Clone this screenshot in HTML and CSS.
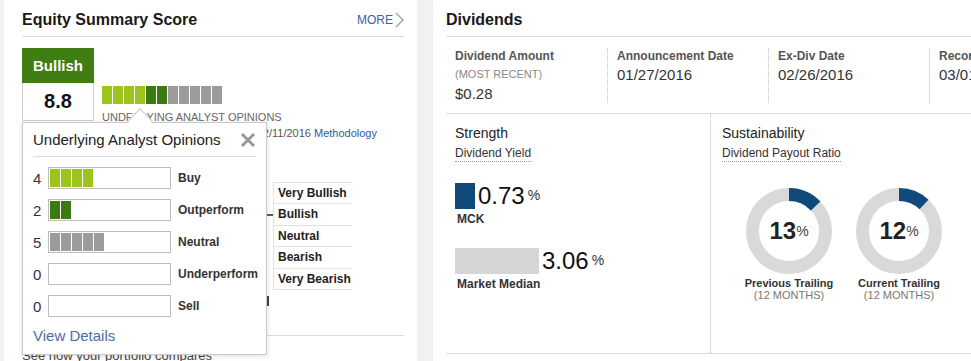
FILE: index.html
```html
<!DOCTYPE html>
<html lang="en">
<head>
  <meta charset="UTF-8">
  <meta name="viewport" content="width=device-width, initial-scale=1.0">
  <title>Equity Summary &amp; Dividends</title>
  <link rel="stylesheet" href="styles.css">
</head>
<body>
  <div class="page">

    <!-- Equity Summary Score -->
    <section class="panel ess">
      <div class="panel-head">
        <h2>Equity Summary Score</h2>
        <a href="#" class="more">MORE
          <svg width="9" height="16" viewBox="0 0 9 16"><polyline points="1,1 8,8 1,15" fill="none" stroke="#a0a0a0" stroke-width="1.4"/></svg>
        </a>
      </div>

      <div class="score-top">
        <div class="score-box">
          <div class="score-label">Bullish</div>
          <div class="score-value">8.8</div>
        </div>
        <div class="score-info">
          <div class="seg-bar">
            <span class="seg buy"></span><span class="seg buy"></span><span class="seg buy"></span><span class="seg buy"></span>
            <span class="seg out"></span><span class="seg out"></span>
            <span class="seg neu"></span><span class="seg neu"></span><span class="seg neu"></span><span class="seg neu"></span><span class="seg neu"></span>
          </div>
          <div class="caption">Underlying Analyst Opinions</div>
          <div class="asof">as of 02/11/2016 <a href="#">Methodology</a></div>
        </div>
      </div>

      <div class="scale">
        <div class="scale-row"><span class="tick"></span><span class="scale-label">Very Bullish</span></div>
        <div class="scale-row"><span class="tick on"></span><span class="scale-label">Bullish</span></div>
        <div class="scale-row"><span class="tick"></span><span class="scale-label">Neutral</span></div>
        <div class="scale-row"><span class="tick"></span><span class="scale-label">Bearish</span></div>
        <div class="scale-row"><span class="tick"></span><span class="scale-label">Very Bearish</span></div>
      </div>
      <div class="axis-end"></div>

      <div class="ess-foot">See how your portfolio compares</div>

      <!-- Opinions popup -->
      <div class="popup">
        <span class="popup-arrow"></span>
        <div class="popup-head">
          <span>Underlying Analyst Opinions</span>
          <svg class="close" width="16" height="16" viewBox="0 0 16 16"><path d="M2 2 L14 14 M14 2 L2 14" stroke="#9a9a9a" stroke-width="3"/></svg>
        </div>
        <div class="op-list">
          <div class="op-row">
            <span class="op-num">4</span>
            <span class="op-bar"><i class="buy"></i><i class="buy"></i><i class="buy"></i><i class="buy"></i></span>
            <span class="op-name">Buy</span>
          </div>
          <div class="op-row">
            <span class="op-num">2</span>
            <span class="op-bar"><i class="out"></i><i class="out"></i></span>
            <span class="op-name">Outperform</span>
          </div>
          <div class="op-row">
            <span class="op-num">5</span>
            <span class="op-bar"><i class="neu"></i><i class="neu"></i><i class="neu"></i><i class="neu"></i><i class="neu"></i></span>
            <span class="op-name">Neutral</span>
          </div>
          <div class="op-row">
            <span class="op-num">0</span>
            <span class="op-bar"></span>
            <span class="op-name">Underperform</span>
          </div>
          <div class="op-row">
            <span class="op-num">0</span>
            <span class="op-bar"></span>
            <span class="op-name">Sell</span>
          </div>
        </div>
        <a href="#" class="view-details">View Details</a>
      </div>
    </section>

    <!-- Dividends -->
    <section class="panel divs">
      <div class="panel-head">
        <h2>Dividends</h2>
      </div>

      <div class="div-row">
        <div class="div-col">
          <div class="div-label">Dividend Amount</div>
          <div class="div-sub">(MOST RECENT)</div>
          <div class="div-amount">$0.28</div>
        </div>
        <div class="div-col">
          <div class="div-label">Announcement Date</div>
          <div class="div-date">01/27/2016</div>
        </div>
        <div class="div-col">
          <div class="div-label">Ex-Div Date</div>
          <div class="div-date">02/26/2016</div>
        </div>
        <div class="div-col">
          <div class="div-label">Record Date</div>
          <div class="div-date">03/01/2016</div>
        </div>
      </div>

      <div class="div-bottom">
        <div class="strength">
          <div class="sec-title">Strength</div>
          <div class="sec-sub">Dividend Yield</div>

          <div class="yield-row">
            <span class="bar mck"></span>
            <span class="yield-num">0.73</span><span class="pct">%</span>
          </div>
          <div class="yield-name">MCK</div>

          <div class="yield-row">
            <span class="bar median"></span>
            <span class="yield-num">3.06</span><span class="pct">%</span>
          </div>
          <div class="yield-name">Market Median</div>
        </div>

        <div class="sustain">
          <div class="sec-title">Sustainability</div>
          <div class="sec-sub">Dividend Payout Ratio</div>

          <div class="donuts">
            <div class="donut-item">
              <div class="donut">
                <svg width="86" height="86" viewBox="0 0 86 86">
                  <circle cx="43" cy="43" r="36.5" fill="none" stroke="#d9d9d9" stroke-width="13"/>
                  <circle cx="43" cy="43" r="36.5" fill="none" stroke="#0f4a7b" stroke-width="13" stroke-dasharray="29.8 229.3" transform="rotate(-90 43 43)"/>
                </svg>
                <div class="donut-val">13<small>%</small></div>
              </div>
              <div class="donut-name">Previous Trailing</div>
              <div class="donut-sub">(12 MONTHS)</div>
            </div>
            <div class="donut-item">
              <div class="donut">
                <svg width="86" height="86" viewBox="0 0 86 86">
                  <circle cx="43" cy="43" r="36.5" fill="none" stroke="#d9d9d9" stroke-width="13"/>
                  <circle cx="43" cy="43" r="36.5" fill="none" stroke="#0f4a7b" stroke-width="13" stroke-dasharray="27.5 229.3" transform="rotate(-90 43 43)"/>
                </svg>
                <div class="donut-val">12<small>%</small></div>
              </div>
              <div class="donut-name">Current Trailing</div>
              <div class="donut-sub">(12 MONTHS)</div>
            </div>
          </div>
        </div>
      </div>
    </section>

  </div>
</body>
</html>
```

FILE: styles.css
```css
* {
  box-sizing: border-box;
}
body {
  margin: 0;
  background-color: #f1f1f1;
  font-family: "Liberation Sans", Arial, sans-serif;
  color: #333;
  overflow: hidden;
}
a {
  text-decoration: none;
}
.page {
  display: flex;
  gap: 16px;
  padding-left: 4px;
  width: 1100px;
}
.panel {
  flex-shrink: 0;
  background-color: white;
  height: 380px;
}
.panel-head {
  display: flex;
  justify-content: space-between;
  align-items: center;
  height: 37px;
  padding-top: 4px;
  border-bottom: 1px solid #dcdcdc;
}
h2 {
  margin: 0;
  font-size: 16px;
  line-height: 20px;
  font-weight: bold;
  color: #1a1a1a;
}
.more {
  display: flex;
  align-items: center;
  gap: 2px;
  font-size: 12px;
  color: #3e5f9e;
}

/* Equity Summary Score */
.ess {
  position: relative;
  width: 413px;
  padding: 0 13px 0 18px;
}
.score-top {
  display: flex;
  margin-top: 11px;
}
.score-box {
  width: 72px;
}
.score-label {
  height: 35px;
  line-height: 35px;
  background-color: #407d12;
  color: white;
  font-size: 15px;
  font-weight: bold;
  text-align: center;
}
.score-value {
  height: 38px;
  line-height: 36px;
  border: 1px solid #cfcfcf;
  border-top: none;
  font-size: 20px;
  font-weight: bold;
  color: #111;
  text-align: center;
}
.score-info {
  width: 275px;
  margin-left: 8px;
  padding-top: 38px;
}
.seg-bar {
  display: flex;
  gap: 1px;
  height: 18px;
}
.seg {
  width: 10px;
}
.buy { background-color: #9dc41d; }
.out { background-color: #3b7a10; }
.neu { background-color: #9b9b9b; }
.caption {
  margin-top: 6px;
  font-size: 11px;
  line-height: 14px;
  color: #666;
  text-transform: uppercase;
}
.asof {
  margin-top: 2px;
  font-size: 11px;
  line-height: 14px;
  color: #555;
  text-align: right;
}
.asof a {
  color: #2f5aa5;
}
.scale {
  margin: 42px 0 0 245px;
}
.scale-row {
  display: flex;
  align-items: center;
}
.tick {
  width: 6px;
}
.tick.on {
  height: 2px;
  background-color: #3b7a10;
}
.scale-label {
  width: 79px;
  height: 21.4px;
  line-height: 20px;
  padding-left: 4px;
  border-left: 1px solid #e2e2e2;
  border-bottom: 1px solid #e2e2e2;
  font-size: 12px;
  font-weight: bold;
  color: #222;
  white-space: nowrap;
}
.scale-row:first-child .scale-label {
  border-top: 1px solid #e2e2e2;
  height: 22.4px;
}
.axis-end {
  width: 2px;
  height: 10px;
  margin: 6px 0 0 245px;
  background-color: #444;
}
.ess-foot {
  margin-top: 29px;
  padding-top: 12px;
  border-top: 1px solid #dcdcdc;
  font-size: 13px;
  color: #444;
}

/* popup */
.popup {
  position: absolute;
  left: 18px;
  top: 122px;
  width: 245px;
  height: 233px;
  padding: 0 10px;
  background-color: white;
  border: 1px solid #cacaca;
  box-shadow: 0 1px 5px rgba(0,0,0,0.15);
}
.popup-arrow {
  position: absolute;
  left: 108px;
  top: -11px;
  width: 18px;
  height: 18px;
  background-color: white;
  border-top: 1px solid #cacaca;
  border-left: 1px solid #cacaca;
  transform: rotate(45deg);
}
.popup-head {
  position: relative;
  display: flex;
  justify-content: space-between;
  align-items: center;
  padding: 7px 0 6px;
  line-height: 20px;
  font-size: 15px;
  color: #222;
  border-bottom: 1px solid #dcdcdc;
}
.close {
  margin-top: -1px;
}
.op-list {
  margin-top: 5px;
}
.op-row {
  display: flex;
  align-items: center;
  height: 32px;
}
.op-num {
  width: 15px;
  flex-shrink: 0;
  font-size: 15px;
  color: #333;
}
.op-bar {
  display: flex;
  flex-shrink: 0;
  gap: 1px;
  width: 123px;
  height: 22px;
  padding: 1px;
  border: 1px solid #bdbdbd;
}
.op-bar i {
  width: 10px;
  height: 18px;
}
.op-name {
  margin-left: 7px;
  font-size: 12px;
  font-weight: bold;
  color: #333;
  white-space: nowrap;
}
.view-details {
  display: block;
  margin-top: 4px;
  line-height: 20px;
  font-size: 15px;
  color: #4d6ca6;
}

/* Dividends */
.divs {
  width: 560px;
  padding-left: 13px;
  overflow: hidden;
}
.div-row {
  display: flex;
  padding: 11px 0 10px;
  border-bottom: 1px solid #dcdcdc;
}
.div-col {
  flex-shrink: 0;
  width: 161px;
  padding-left: 9px;
}
.div-col + .div-col {
  border-left: 1px dotted #bdbdbd;
}
.div-label {
  margin-top: 1px;
  font-size: 12px;
  line-height: 15px;
  font-weight: bold;
  color: #555;
  white-space: nowrap;
}
.div-sub {
  margin-top: 3px;
  font-size: 11px;
  line-height: 14px;
  color: #888;
}
.div-amount {
  margin-top: 4px;
  font-size: 15px;
  line-height: 18px;
  color: #333;
}
.div-date {
  margin-top: 2px;
  font-size: 15px;
  line-height: 18px;
  color: #333;
}
.div-bottom {
  display: flex;
  height: 240px;
  border-bottom: 1px solid #dcdcdc;
}
.strength {
  width: 264px;
  padding: 10px 0 0 9px;
}
.sustain {
  flex: 1;
  padding: 10px 0 0 11px;
  border-left: 1px dotted #bdbdbd;
}
.sec-title {
  font-size: 14px;
  line-height: 18px;
  color: #222;
}
.sec-sub {
  display: inline-block;
  margin-top: 4px;
  font-size: 12px;
  line-height: 15px;
  color: #333;
  border-bottom: 1px dotted #999;
}
.yield-row {
  display: flex;
  align-items: center;
  margin-top: 21px;
}
.bar {
  height: 26px;
}
.mck {
  width: 20px;
  background-color: #0f4a7b;
}
.median {
  width: 84px;
  background-color: #d6d6d6;
}
.yield-num {
  margin-left: 3px;
  font-size: 24px;
  line-height: 26px;
  color: #111;
}
.pct {
  margin-left: 3px;
  font-size: 14px;
  color: #333;
  position: relative;
  top: -1px;
}
.yield-name {
  margin: 3px 0 0 2px;
  font-size: 12px;
  line-height: 15px;
  font-weight: bold;
  color: #333;
}
.donuts {
  display: flex;
  gap: 10px;
  margin: 26px 0 0 17px;
}
.donut-item {
  width: 100px;
  text-align: center;
}
.donut {
  position: relative;
  width: 86px;
  height: 86px;
  margin: 0 auto;
}
.donut svg {
  display: block;
}
.donut-val {
  position: absolute;
  top: 0;
  left: 0;
  right: 0;
  bottom: 0;
  display: flex;
  align-items: center;
  justify-content: center;
  font-size: 24px;
  font-weight: bold;
  color: #222;
}
.donut-val small {
  font-size: 14px;
  font-weight: normal;
  color: #444;
}
.donut-name {
  margin-top: 3px;
  font-size: 11px;
  line-height: 12px;
  font-weight: bold;
  color: #333;
}
.donut-sub {
  font-size: 11px;
  line-height: 12px;
  color: #777;
}
```
